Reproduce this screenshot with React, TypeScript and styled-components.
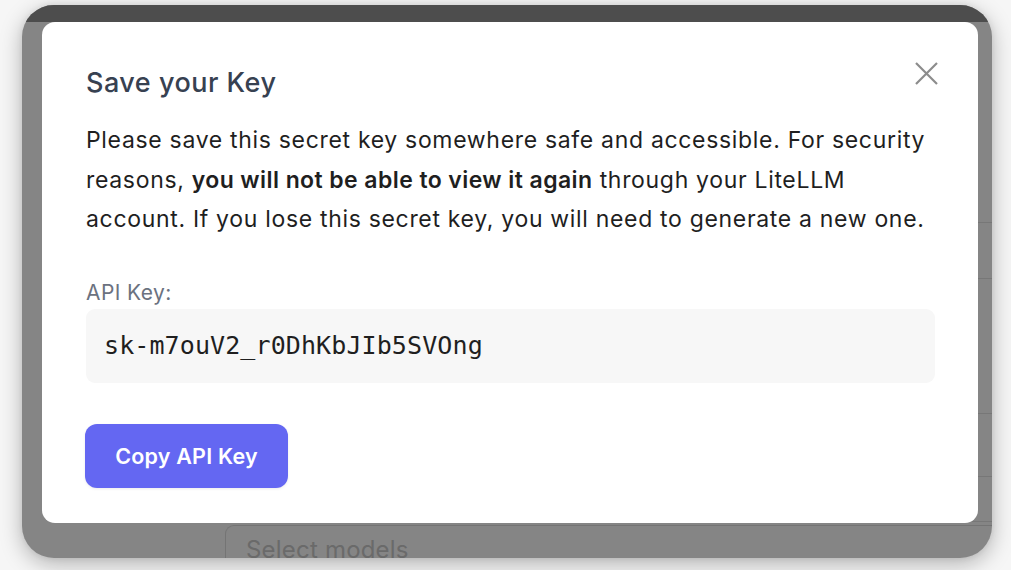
import React from "react";
import styled, { createGlobalStyle } from "styled-components";

const Global = createGlobalStyle`
  html, body { margin: 0; padding: 0; }
  body {
    background: #f6f6f6;
    font-family: Inter, "Noto Sans", "Liberation Sans", sans-serif;
    width: 1011px;
    height: 570px;
    overflow: hidden;
  }
`;

const Stage = styled.div`
  padding: 5px 0 0 22px;
`;

const Frame = styled.div`
  position: relative;
  width: 970px;
  height: 553px;
  border-radius: 32px;
  overflow: hidden;
  background: #858585;
  box-shadow: 0 6px 22px rgba(0, 0, 0, 0.28), 0 0 6px rgba(0, 0, 0, 0.08);
  display: flex;
  flex-direction: column;
`;

const TopBand = styled.div`
  height: 17px;
  flex: none;
  background: #4d4d4d;
`;

const BackContent = styled.div`
  flex: 1;
  padding-left: 203px;
  display: flex;
  flex-direction: column;
`;

const BackRow = styled.div<{ $h: number }>`
  height: ${(p) => p.$h}px;
  flex: none;
  border-bottom: 1px solid #777777;
  box-sizing: border-box;
`;

const BackSelect = styled.div`
  margin-top: 3px;
  height: 60px;
  border-left: 1px solid #747474;
  border-top: 1px solid #747474;
  border-top-left-radius: 9px;
  padding: 6px 0 0 20px;
  font-size: 24px;
  letter-spacing: 0.2px;
  color: #6a6a6a;
  line-height: 36px;
  white-space: nowrap;
`;

const Overlay = styled.div`
  position: absolute;
  inset: 0;
  padding: 17px 0 0 20px;
`;

const Modal = styled.div`
  position: relative;
  width: 936px;
  height: 501px;
  box-sizing: border-box;
  background: #ffffff;
  border-radius: 13px;
  padding: 43px 43px 0 44px;
  display: flex;
  flex-direction: column;
`;

const Title = styled.h2`
  margin: 0;
  font-size: 27px;
  line-height: 36px;
  font-weight: 500;
  letter-spacing: 0.5px;
  color: #374151;
`;

const Close = styled.button`
  position: absolute;
  top: 40px;
  right: 40px;
  width: 23px;
  height: 23px;
  padding: 0;
  border: none;
  background: none;
  display: flex;
`;

const Para = styled.p`
  margin: 20px 0 0;
  font-size: 23px;
  line-height: 39.5px;
  letter-spacing: 0.68px;
  color: #1f1f1f;
  strong {
    font-weight: 600;
    letter-spacing: 0.42px;
  }
`;

const Label = styled.div`
  margin-top: 38px;
  font-size: 21px;
  line-height: 30px;
  letter-spacing: 0.4px;
  color: #6b7280;
`;

const KeyBox = styled.div`
  margin-top: 1px;
  height: 74px;
  box-sizing: border-box;
  background: #f7f7f7;
  border-radius: 9px;
  padding: 0 18px;
  display: flex;
  align-items: center;
  font-family: "DejaVu Sans Mono", "Liberation Mono", monospace;
  font-size: 25px;
  letter-spacing: 0.1px;
  color: #1f1f1f;
`;

const CopyButton = styled.button`
  margin: 41px 0 0 -1px;
  align-self: flex-start;
  width: 203px;
  height: 64px;
  border: none;
  border-radius: 12px;
  background: #6467f2;
  color: #ffffff;
  font-family: Inter, "Noto Sans", sans-serif;
  font-size: 21.5px;
  font-weight: 600;
  letter-spacing: 0.2px;
  box-shadow: 0 1px 3px rgba(0, 0, 0, 0.08);
`;

export default function App() {
  return (
    <>
      <Global />
      <Stage>
        <Frame>
          <TopBand />
          <BackContent>
            <BackRow $h={201} />
            <BackRow $h={56} />
            <BackRow $h={135} />
            <BackRow $h={63} />
            <BackRow $h={45} />
            <BackSelect>Select models</BackSelect>
          </BackContent>
          <Overlay>
            <Modal>
              <Title>Save your Key</Title>
              <Close aria-label="Close">
                <svg width="23" height="23" viewBox="0 0 23 23">
                  <path
                    d="M1 1 L22 22 M22 1 L1 22"
                    stroke="#8c8c8c"
                    strokeWidth="2.2"
                    fill="none"
                  />
                </svg>
              </Close>
              <Para>
                Please save this secret key somewhere safe and accessible. For
                security reasons, <strong>you will not be able to view it again</strong>{" "}
                through your LiteLLM account. If you lose this secret key, you
                will need to generate a new one.
              </Para>
              <Label>API Key:</Label>
              <KeyBox>sk-m7ouV2_r0DhKbJIb5SVOng</KeyBox>
              <CopyButton>Copy API Key</CopyButton>
            </Modal>
          </Overlay>
        </Frame>
      </Stage>
    </>
  );
}
